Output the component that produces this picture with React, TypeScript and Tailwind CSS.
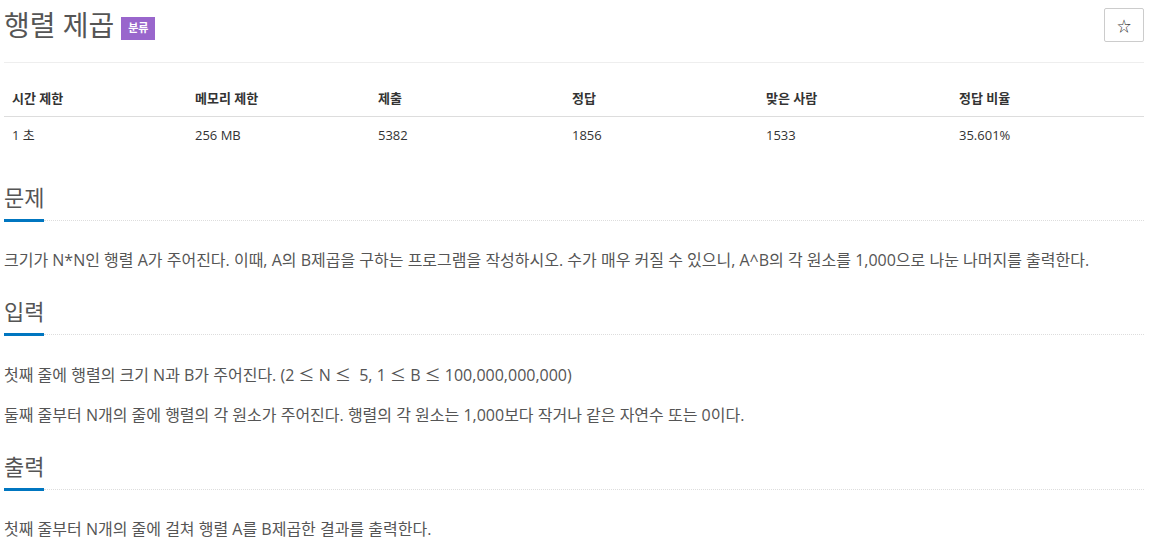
import React from "react";

const font = { fontFamily: '"Open Sans", "Noto Sans CJK KR", sans-serif' };

function Section({ title, first, children }: { title: string; first?: boolean; children: React.ReactNode }) {
  return (
    <section className={first ? "" : "mt-[8px]"}>
      <h2 className="text-[22px] leading-[30px] h-[30px] text-[#555] font-normal">{title}</h2>
      <div className="mt-[7px] flex items-center h-[3px]">
        <div className="w-[40px] h-[3px] bg-[#0076c0]" />
        <div className="flex-1 border-t border-dotted border-[#ddd]" />
      </div>
      <div className="mt-[26px]">{children}</div>
    </section>
  );
}

function P({ children }: { children: React.ReactNode }) {
  return <p className="text-[16px] leading-[24px] text-[#555] mb-[16px]">{children}</p>;
}

function Le() {
  return <span className="font-['Noto_Sans_CJK_KR',sans-serif]">≤</span>;
}

export default function App() {
  const headers = ["시간 제한", "메모리 제한", "제출", "정답", "맞은 사람", "정답 비율"];
  const values = ["1 초", "256 MB", "5382", "1856", "1533", "35.601%"];
  const cols = "grid grid-cols-[183px_183px_194px_194px_193px_193px]";
  return (
    <div className="bg-white min-h-[548px]" style={font}>
      <div className="ml-[4px] w-[1140px]">
        <div className="flex justify-between items-start h-[62px]">
          <div className="flex items-center mt-[7px]">
            <h1 className="text-[28px] leading-[36px] text-[#555] font-normal">행렬 제곱</h1>
            <span className="ml-[7px] mt-[6px] h-[23px] w-[34px] flex items-center justify-center bg-[#9966cc] text-white text-[11px] font-bold">
              분류
            </span>
          </div>
          <button className="mt-[8px] w-[40px] h-[34px] border border-[#ccc] rounded-[2px] flex items-center justify-center text-[#333] text-[14px] bg-white">
            ☆
          </button>
        </div>
        <div className="h-px bg-[#eee]" />
        <div className="mt-[19px]">
          <div className={`${cols} h-[35px] items-center border-b border-[#ddd]`}>
            {headers.map((h) => (
              <div key={h} className="px-[8px] text-[13px] font-bold text-[#333]">
                {h}
              </div>
            ))}
          </div>
          <div className={`${cols} h-[37px] items-center`}>
            {values.map((v) => (
              <div key={v} className="px-[8px] text-[13px] text-[#333]">
                {v}
              </div>
            ))}
          </div>
        </div>
        <div className="mt-[28px] flex flex-col">
          <Section title="문제" first>
            <P>크기가 N*N인 행렬 A가 주어진다. 이때, A의 B제곱을 구하는 프로그램을 작성하시오. 수가 매우 커질 수 있으니, A^B의 각 원소를 1,000으로 나눈 나머지를 출력한다.</P>
          </Section>
          <Section title="입력">
            <P>
              첫째 줄에 행렬의 크기 N과 B가 주어진다. (2 <Le /> N <Le />&nbsp; 5, 1 <Le /> B <Le /> 100,000,000,000)
            </P>
            <P>둘째 줄부터 N개의 줄에 행렬의 각 원소가 주어진다. 행렬의 각 원소는 1,000보다 작거나 같은 자연수 또는 0이다.</P>
          </Section>
          <Section title="출력">
            <P>첫째 줄부터 N개의 줄에 걸쳐 행렬 A를 B제곱한 결과를 출력한다.</P>
          </Section>
        </div>
      </div>
    </div>
  );
}
